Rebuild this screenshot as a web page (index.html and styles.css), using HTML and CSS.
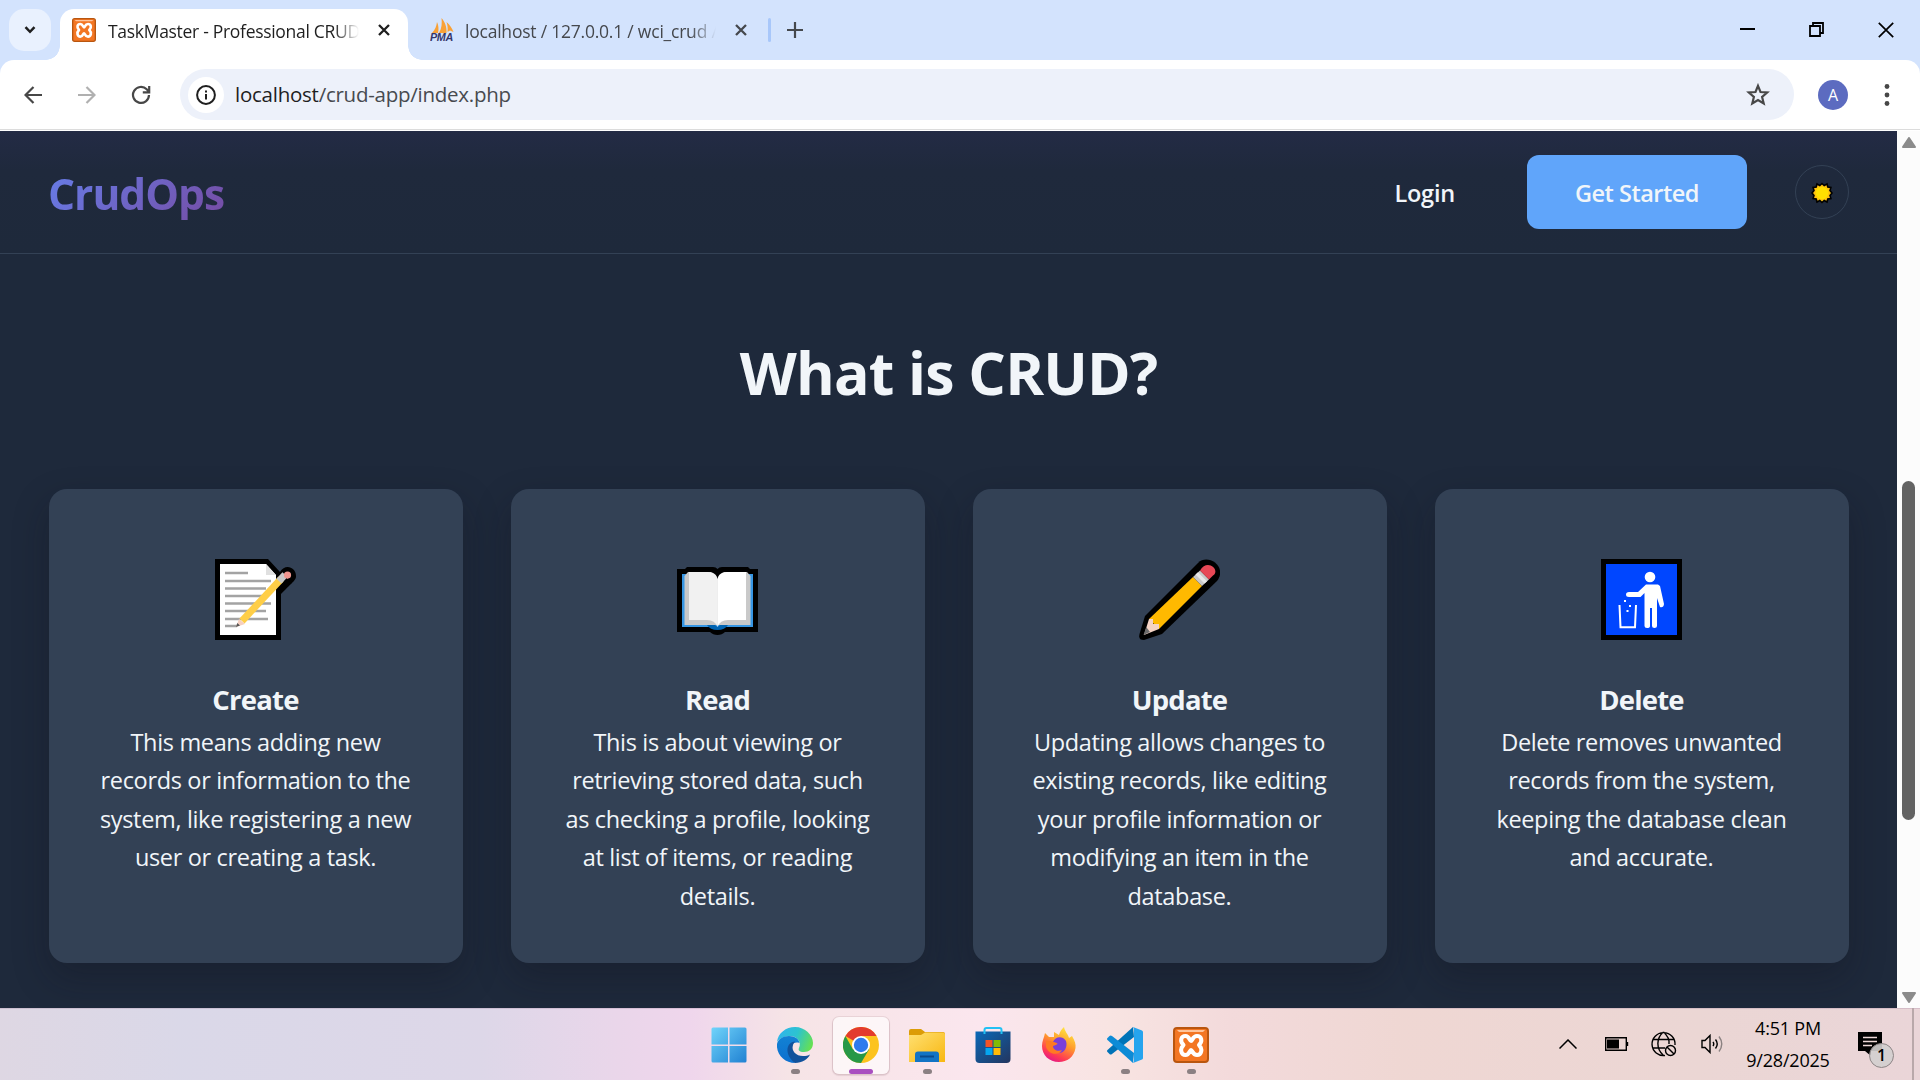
FILE: index.html
```html
<!DOCTYPE html>
<html lang="en">
<head>
<meta charset="utf-8">
<title>TaskMaster - Professional CRUD</title>
<link rel="stylesheet" href="styles.css">
</head>
<body>
<svg class="defs" width="0" height="0">
  <symbol id="xampp" viewBox="0 0 36 36">
    <rect x="1" y="1" width="34" height="34" rx="3" fill="#f37623" stroke="#b9560f" stroke-width="2"/>
    <path d="M4 3H32L30 5H6Z" fill="#ffc49a"/>
    <path d="M18 14C16.500 14 16.500 9 12.500 9C8 9 6.500 14 10.500 18C6.500 22 8 28 12.500 28C16.500 28 16.500 23 18 23C19.500 23 19.500 28 24 28C28.500 28 30 22 26 18C30 14 28.500 9 24 9C19.500 9 19.500 14 18 14Z" fill="none" stroke="#fff" stroke-width="4" stroke-linejoin="round"/>
  </symbol>
</svg>

<div class="tabstrip">
  <div class="tabsearch"><svg width="12" height="8" viewBox="0 0 12 8"><path d="M1.500 1.200L6 5.800L10.500 1.200" fill="none" stroke="#1f1f1f" stroke-width="2.500"/></svg></div>
  <div class="tab tab-active">
    <svg class="favicon" width="24" height="24"><use href="#xampp"/></svg>
    <span class="tab-title">TaskMaster - Professional CRUD</span>
    <svg class="tab-close" width="12" height="12" viewBox="0 0 12 12"><path d="M1 1L11 11M11 1L1 11" stroke="#1f1f1f" stroke-width="2.300"/></svg>
  </div>
  <div class="tab tab-idle">
    <svg class="favicon" width="24" height="24" viewBox="0 0 24 24"><path d="M2 15C5 12 6.500 8 7 4C8.500 7 9 11 8 15ZM9 15C12 10 12 5 11.500 0C15 4 17 9 16.500 15ZM17.500 14C18 10 17.500 7 16.500 4C20 7 22 10 23.500 14L20 12.500Z" fill="#f9a136"/><text x="0" y="23" class="pma" textLength="23" lengthAdjust="spacingAndGlyphs">PMA</text></svg>
    <span class="tab-title">localhost / 127.0.0.1 / wci_crud /</span>
    <svg class="tab-close" width="12" height="12" viewBox="0 0 12 12"><path d="M1 1L11 11M11 1L1 11" stroke="#45484d" stroke-width="2.300"/></svg>
  </div>
  <div class="tab-sep"></div>
  <svg class="newtab" width="16" height="16" viewBox="0 0 16 16"><path d="M8 0V16M0 8H16" stroke="#45484d" stroke-width="2.200"/></svg>
  <div class="winctl">
    <svg width="15" height="15" viewBox="0 0 15 15"><path d="M0 7H15" stroke="#000" stroke-width="2"/></svg>
    <svg width="15" height="15" viewBox="0 0 15 15"><path d="M1 4H11V14H1ZM4 4V1H14V11H11" fill="none" stroke="#000" stroke-width="1.800"/></svg>
    <svg width="16" height="16" viewBox="0 0 16 16"><path d="M.8 .8L15.200 15.200M15.200 .8L.8 15.200" stroke="#000" stroke-width="1.700"/></svg>
  </div>
</div>

<div class="toolbar-wrap">
<div class="toolbar">
  <svg class="nav-ico" width="18" height="18" viewBox="0 0 18 18"><path d="M18 9H2M9.500 1L1.500 9L9.500 17" fill="none" stroke="#474747" stroke-width="2.200"/></svg>
  <svg class="nav-ico" width="18" height="18" viewBox="0 0 18 18"><path d="M0 9H16M8.500 1L16.500 9L8.500 17" fill="none" stroke="#b0b0b0" stroke-width="2.200"/></svg>
  <svg class="nav-ico" width="20" height="20" viewBox="0 0 20 20"><path d="M18 10A8 8 0 1 1 15.700 4.300L18 6.700M18.200 1V7.400H11.800" fill="none" stroke="#474747" stroke-width="2.200"/></svg>
  <div class="omnibox">
    <div class="siteinfo"><svg width="20" height="20" viewBox="0 0 20 20"><circle cx="10" cy="10" r="8.900" fill="none" stroke="#1f1f1f" stroke-width="2"/><path d="M10 9V14.500M10 5.500V7.500" stroke="#1f1f1f" stroke-width="2"/></svg></div>
    <span class="url"><b>localhost</b>/crud-app/index.php</span>
    <svg class="star" width="24" height="24" viewBox="0 0 24 24"><path d="M12 2.800L14.500 9L21.200 9.500L16.100 13.900L17.700 20.500L12 17L6.300 20.500L7.900 13.900L2.800 9.500L9.500 9Z" fill="none" stroke="#474747" stroke-width="2.200"/></svg>
  </div>
  <div class="avatar">A</div>
  <svg class="kebab" width="6" height="24" viewBox="0 0 6 24"><g fill="#474747"><circle cx="3" cy="3.500" r="2.400"/><circle cx="3" cy="12" r="2.400"/><circle cx="3" cy="20.500" r="2.400"/></g></svg>
</div>
</div>

<div class="viewport">
  <div class="page">
    <header class="navbar">
      <div class="logo">CrudOps</div>
      <nav class="links">
        <span class="login">Login</span>
        <span class="cta">Get Started</span>
        <span class="theme"><svg width="22" height="24" viewBox="-11 -12 22 24"><path d="M0 -9.500L2.200 -7.500L5 -9L5.800 -6L8.900 -5.600L8 -2.500L10 0L8 2.500L8.900 5.600L5.800 6L5 9L2.200 7.500L0 9.500L-2.200 7.500L-5 9L-5.800 6L-8.900 5.600L-8 2.500L-10 0L-8 -2.500L-8.900 -5.600L-5.800 -6L-5 -9L-2.200 -7.500Z" fill="#ffc20e" stroke="#000" stroke-width="1.600"/><circle r="6.300" fill="#ffe000"/></svg></span>
      </nav>
    </header>
    <main class="section">
      <h2>What is CRUD?</h2>
      <div class="cards">
        <article class="card">
          <svg width="81" height="81" viewBox="0 0 81 81">
            <path d="M0 0H53L65 13C70 4 81 8 81 17C81 21 79 22 66 35V81H0Z"/>
            <path d="M5 5H51L61 16V76H5Z" fill="#fff"/><path d="M51 5V16H61Z" fill="#e0e0e0"/>
            <path d="M10 14H33M10 22H56M10 29.500H51M10 37H51M10 44.500H56M10 52H51M10 60H53M10 67H22" stroke="#a3a3a3" stroke-width="2.300"/>
            <path d="M21 68L24 60L30 65Z" fill="#f5cfc0"/><path d="M21 68L22.300 64L25 66.500Z" fill="#555"/>
            <path d="M27 62L66 20" stroke="#ffce47" stroke-width="7"/><path d="M64 22.200L70 15.700" stroke="#c8c8c8" stroke-width="7"/><path d="M70 15.700L72.500 13L76 16.500L72.500 20Z" fill="#f0968f"/><circle cx="72.500" cy="16" r="3.600" fill="#f0968f"/>
          </svg>
          <h3>Create</h3>
          <p>This means adding new<br>records or information to the<br>system, like registering a new<br>user or creating a task.</p>
        </article>
        <article class="card">
          <svg width="81" height="81" viewBox="0 -8 81 81">
            <path d="M0 2H8L10 0H36Q39 0 40.500 2Q42 0 45 0H71L73 2H81V65H48Q45 68 40.500 68Q36 68 33 65H0Z"/>
            <path d="M5 7H76V60H5Z" fill="#3796e3"/><path d="M7.500 9L11 5H70L73.500 9V58H7.500Z" fill="#c9c9c9"/>
            <path d="M12 5H31Q39 5 40.500 12V60Q38 53 30 53H12Z" fill="#f1f1f1"/><path d="M69 5H50Q42 5 40.500 12V60Q43 53 51 53H69Z" fill="#fff"/>
            <path d="M34 5H47Q41 7 40.500 12Q40 7 34 5Z"/><path d="M30 58H38L40.500 60L43 58H51Q48 63 40.500 63Q33 63 30 58Z" fill="#0063b1"/>
          </svg>
          <h3>Read</h3>
          <p>This is about viewing or<br>retrieving stored data, such<br>as checking a profile, looking<br>at list of items, or reading<br>details.</p>
        </article>
        <article class="card">
          <svg width="81" height="81" viewBox="0 0 81 81">
            <path d="M59 4C69 -6 89 8 78 22L23 75L5 81Q-1 81 .5 75L6 57Z"/>
            <path d="M10 60L54 18L63 27L20 70Z" fill="#ffb900"/>
            <path d="M10 60H14V65H20V70L5 76Z" fill="#f5d4c6"/><path d="M7.200 68L11 73L4.500 76Z" fill="#6b6b6b"/>
            <path d="M54 18L61 11.500L70 20.500L63 27Z" fill="#c9c9c9"/><path d="M56.500 15.500L59 13.300L68 22.300L65.500 24.500Z" fill="#e8e8e8"/>
            <path d="M61 11.500C68 -1 82 11 74 16.500L70 20.500Z" fill="#e74856"/>
          </svg>
          <h3>Update</h3>
          <p>Updating allows changes to<br>existing records, like editing<br>your profile information or<br>modifying an item in the<br>database.</p>
        </article>
        <article class="card">
          <svg width="81" height="81" viewBox="0 0 81 81">
            <path d="M0 0H81V81H0Z"/><path d="M5 5H76V76H5Z" fill="#0046ff"/>
            <g fill="#fff"><circle cx="49" cy="18" r="5.300"/><path d="M45 25.500H57L59 27L63 45Q62.500 49 59 48L56 39V67Q56 69 53.500 69Q51 69 51 67V49H49V67Q49 69 46 69Q43.500 69 43.500 67V34L39.500 38H28Q25 38 25 35.500Q25 33 28 33H37Z"/><path d="M23 41H25V43H23ZM28 46H30V48H28ZM25.500 51H27.500V53H25.500Z"/></g>
            <path d="M18.500 46L19.500 68.300H34L35 46" fill="none" stroke="#fff" stroke-width="2"/>
          </svg>
          <h3>Delete</h3>
          <p>Delete removes unwanted<br>records from the system,<br>keeping the database clean<br>and accurate.</p>
        </article>
      </div>
    </main>
  </div>
  <div class="scrollbar">
    <svg width="14" height="11" viewBox="0 0 14 11"><path d="M7 1L13 10H1Z" fill="#8b8b8b" stroke="#8b8b8b" stroke-width="2" stroke-linejoin="round"/></svg>
    <div class="thumb"></div>
    <svg class="down" width="14" height="11" viewBox="0 0 14 11"><path d="M7 10L13 1H1Z" fill="#8b8b8b" stroke="#8b8b8b" stroke-width="2" stroke-linejoin="round"/></svg>
  </div>
</div>

<footer class="taskbar">
  <div class="apps">
    <div class="app"><svg width="36" height="36" viewBox="0 0 36 36"><defs><linearGradient id="w" x1="0" y1="0" x2="1" y2="1" gradientUnits="userSpaceOnUse" gradientTransform="scale(36)"><stop stop-color="#71d5fb"/><stop offset="1" stop-color="#1f80d2"/></linearGradient></defs><path d="M2 .5H17V17.500H.5V2Q.5 .5 2 .5ZM18.500 .5H34Q35.500 .5 35.500 2V17.500H18.500ZM.5 19H17V35.500H2Q.5 35.500 .5 34ZM18.500 19H35.500V34Q35.500 35.500 34 35.500H18.500Z" fill="url(#w)"/></svg></div>
    <div class="app run"><svg width="36" height="36" viewBox="0 0 36 36"><defs><linearGradient id="e1" x1="0" x2="1" y1=".3" y2=".6"><stop stop-color="#30b4ec"/><stop offset=".5" stop-color="#2cc3d0"/><stop offset="1" stop-color="#66e052"/></linearGradient><linearGradient id="e2" x1="0" y1="0" x2="0" y2="1"><stop stop-color="#1282d4"/><stop offset="1" stop-color="#0d6fcf"/></linearGradient></defs><path d="M0 15C1 6 9 0 18 0C28 0 36 8 36 16C36 22 32 25 27 25C22 25 21 23 22 21C25 15 20 9 13 9C7 9 2 12 0 15Z" fill="url(#e1)"/><path d="M0 17C1 12 6 9 12 9C18 9 22 12 22.500 16C13 13 10 25 18 36C8 36 -1 28 0 17Z" fill="url(#e2)"/><path d="M18 14.500C9 15 7 28 18 36C25 36 31 32 33 27.500C31 28.500 29 29 26 29C19 29 14 24 16 18C16.500 16 18 15 18 14.500Z" fill="#10529c"/></svg></div>
    <div class="app run current"><svg width="36" height="36" viewBox="0 0 36 36"><circle cx="18" cy="18" r="18" fill="#fcc31e"/><path d="M18 18L2.400 9A18 18 0 0 1 33.600 9H18Z" fill="#e33b2e"/><path d="M2.400 9A18 18 0 0 0 18 36L26 22.500L18 18L10 22.500Z" fill="#279847"/><circle cx="18" cy="18" r="9" fill="#fff"/><circle cx="18" cy="18" r="7.200" fill="#2f7bed"/></svg></div>
    <div class="app run"><svg width="36" height="36" viewBox="0 0 36 36"><path d="M0 4Q0 2 2 2H12L16 5H34Q36 5 36 7V12H0Z" fill="#dc9c07"/><defs><linearGradient id="f" x1="0" y1="0" x2="1" y2="1"><stop stop-color="#ffe072"/><stop offset="1" stop-color="#f8b711"/></linearGradient></defs><path d="M0 8H12L16 5.500H34Q36 5.500 36 7.500V35H0Z" fill="url(#f)"/><path d="M6 35V27.500Q6 24.500 9 24.500H27Q30 24.500 30 27.500V35Z" fill="#1274c5"/><path d="M11 29.500H25" stroke="#0a4a8c" stroke-width="2"/></svg></div>
    <div class="app"><svg width="36" height="36" viewBox="0 0 36 36"><defs><linearGradient id="s" x1="0" y1="0" x2="1" y2="1"><stop stop-color="#0a69b8"/><stop offset="1" stop-color="#24355e"/></linearGradient></defs><path d="M.5 4.500H35.500V32Q35.500 36 31.500 36H4.500Q.5 36 .5 32Z" fill="url(#s)"/><path d="M9.500 7V3Q9.500 1 11.500 1H24.500Q26.500 1 26.500 3V7" fill="none" stroke="#22c1f4" stroke-width="2"/><path d="M10.500 13H17.500V20H10.500Z" fill="#f35325"/><path d="M18.500 13H25.500V20H18.500Z" fill="#81bc06"/><path d="M10.500 21H17.500V28H10.500Z" fill="#05a6f0"/><path d="M18.500 21H25.500V28H18.500Z" fill="#ffba08"/></svg></div>
    <div class="app"><svg width="36" height="36" viewBox="0 0 36 36"><defs><linearGradient id="ff" x1=".8" y1="0" x2=".3" y2="1"><stop stop-color="#fff043"/><stop offset=".45" stop-color="#ff9a2c"/><stop offset=".8" stop-color="#ff3b52"/><stop offset="1" stop-color="#e3168a"/></linearGradient></defs><path d="M4 6L8 10L13 10L13 5L18 8C19 4 21 2 23 0C24 5 27 7 28 11L31 9C34 14 35 17 34.500 21C33 30 26 35 18 35C8 35 1 28 1 19C1 14 3 11 4 6Z" fill="url(#ff)"/><path d="M12 15C14 10 21 8 25 14C27 20 23 27 17 26C11 25 9 20 12 18L17 17Z" fill="#7a3fd8"/><path d="M5 14C9 13 11 15 16 16C16 18 14 18 12 19C12 23 17 25 21 23C18 29 8 28 5 20Z" fill="#ff7a22"/></svg></div>
    <div class="app run"><svg width="36" height="36" viewBox="0 0 36 36"><path d="M26 0L27 10L5 27Q3.500 28 2.500 27L.5 25Q-.5 24 .5 23Z" fill="#0073b7"/><path d="M26 36L27 26L5 9Q3.500 8 2.500 9L.5 11Q-.5 12 .5 13Z" fill="#0d8bd6"/><path d="M26 0L35 3.500Q36 4 36 5V31Q36 32 35 32.500L26 36Q27 35 27 33V3Q27 1 26 0Z" fill="#26a4ee"/></svg></div>
    <div class="app run"><svg width="36" height="36"><use href="#xampp"/></svg></div>
  </div>
  <div class="tray">
    <svg width="18" height="10" viewBox="0 0 18 10"><path d="M.5 9.500L9 1L17.500 9.500" fill="none" stroke="#000" stroke-width="1.500"/></svg>
    <svg width="24" height="14" viewBox="0 0 24 14"><path d="M.7 .7H21.300V13.300H.7ZM22.500 5V9" fill="none" stroke="#000" stroke-width="1.400"/><path d="M2 2.500H14V11.500H2Z"/></svg>
    <svg width="26" height="26" viewBox="0 0 26 26"><g fill="none" stroke="#000" stroke-width="1.400"><path d="M14 24.500A11.500 11.500 0 1 1 24 14M2 8.500H23M2 17H14M12.500 1C5 7 5 18 12.500 24.500M12.500 1C17 5 18.500 9 18 13"/><circle cx="19.500" cy="19.500" r="5"/><path d="M16 16L23 23"/></g></svg>
    <svg width="22" height="20" viewBox="0 0 22 20"><g fill="none" stroke="#000" stroke-width="1.400"><path d="M1 6.500H4L9 1.500V18.500L4 13.500H1ZM12 8Q13.500 10 12 12M14.500 5.500Q18 10 14.500 14.500"/><path d="M18 2.500Q23.500 10 18 17.500" stroke="#8c8383"/></g></svg>
    <div class="clock"><span>4:51 PM</span><span>9/28/2025</span></div>
    <div class="notif"><svg width="24" height="24" viewBox="0 0 24 24"><path d="M0 0H24V19H13V24L7 19H0Z"/><path d="M5 5.500H19M5 9.500H19M5 13.500H14" stroke="#ecd7d6" stroke-width="1.300"/></svg><span class="badge">1</span></div>
    <div class="peek"></div>
  </div>
</footer>
</body>
</html>
```
FILE: styles.css
```css
* { box-sizing: border-box; }
body {
  margin: 0;
  width: 1920px;
  height: 1080px;
  overflow: hidden;
  display: flex;
  flex-direction: column;
  font-family: "Open Sans", "Noto Sans", sans-serif;
}
svg { display: block; flex: none; }
.defs { position: absolute; }

/* Browser tabs */
.tabstrip {
  height: 60px;
  flex: none;
  display: flex;
  align-items: center;
  background: #d3e3fd;
  padding-left: 9px;
}
.tabsearch {
  width: 42px;
  height: 42px;
  border-radius: 15px;
  background: #e9f1fe;
  display: flex;
  align-items: center;
  justify-content: center;
}
.tab {
  display: flex;
  align-items: center;
  height: 51px;
  align-self: flex-end;
  padding-bottom: 9px;
  font-size: 17.5px;
  letter-spacing: -0.3px;
}
.tab-active {
  position: relative;
  width: 348px;
  margin-left: 9px;
  padding-left: 12px;
  background: #fff;
  border-radius: 14px 14px 0 0;
  color: #1f1f1f;
}
.tab-active::before,
.tab-active::after {
  content: "";
  position: absolute;
  bottom: 0;
  width: 14px;
  height: 14px;
}
.tab-active::before { left: -14px; background: radial-gradient(circle at 0 0, transparent 13.5px, #fff 14px); }
.tab-active::after { right: -14px; background: radial-gradient(circle at 100% 0, transparent 13.5px, #fff 14px); }
.tab-idle { color: #45484d; padding-left: 22px; width: 360px; }
.tab-title {
  width: 251px;
  margin-left: 12px;
  padding-top: 2px;
  line-height: 26px;
  white-space: nowrap;
  overflow: hidden;
  -webkit-mask-image: linear-gradient(90deg, #000 90%, transparent);
  mask-image: linear-gradient(90deg, #000 90%, transparent);
}
.tab-idle .tab-title { margin-left: 11px; letter-spacing: -0.22px; }
.tab-close { margin-left: 19px; }
.favicon { flex: none; }
.pma { font: italic 700 10px "Liberation Sans", sans-serif; fill: #34366b; }
.tab-sep { width: 3px; height: 24px; border-radius: 2px; background: #a8c7fa; }
.newtab { margin-left: 16px; }
.winctl { display: flex; gap: 54px; margin-left: auto; padding-right: 26px; }

/* Address bar */
.toolbar-wrap { flex: none; background: #d3e3fd; }
.toolbar {
  height: 71px;
  display: flex;
  align-items: center;
  padding: 0 0 2px 24px;
  background: #fff;
  border-radius: 14px 14px 0 0;
  box-shadow: inset 0 -1px #fff, inset 0 -2px #dcdcdc;
}
.nav-ico + .nav-ico { margin-left: 36px; }
.nav-ico:nth-child(3) { margin-left: 35px; }
.omnibox {
  width: 1614px;
  height: 51px;
  margin-left: 29px;
  padding: 0 24px 0 8px;
  display: flex;
  align-items: center;
  border-radius: 26px;
  background: #edf1fa;
}
.siteinfo {
  width: 36px;
  height: 36px;
  border-radius: 50%;
  background: #fff;
  display: flex;
  align-items: center;
  justify-content: center;
}
.url { margin-left: 11px; padding-bottom: 1px; font-size: 20.5px; letter-spacing: -0.25px; color: #474a4f; }
.url b { font-weight: 400; color: #1f1f1f; }
.star { margin-left: auto; }
.avatar {
  width: 30px;
  height: 30px;
  margin-left: 24px;
  border-radius: 50%;
  background: #5c6bc0;
  color: #fff;
  font-size: 16px;
  line-height: 30px;
  text-align: center;
}
.kebab { margin-left: 36px; }

/* Web page */
.viewport { height: 877px; flex: none; display: flex; }
.page { width: 1897px; background: #1e293b; overflow: hidden; }
.navbar {
  height: 123px;
  display: flex;
  align-items: center;
  justify-content: space-between;
  padding: 0 48px;
  border-bottom: 1px solid #334155;
  background: linear-gradient(#232b45, #1f293c 40px, #1e293b);
}
.logo {
  font-size: 42.5px;
  font-weight: 700;
  letter-spacing: -1px;
  line-height: 60px;
  margin-top: 4px;
  background: linear-gradient(135deg, #667eea, #764ba2);
  -webkit-background-clip: text;
  background-clip: text;
  color: transparent;
}
.links {
  display: flex;
  align-items: center;
  font-size: 23.5px;
  font-weight: 600;
  color: #f1f5f9;
}
.login { margin-right: 72px; padding-top: 2px; letter-spacing: -0.2px; }
.cta {
  width: 220px;
  height: 74px;
  line-height: 77px;
  border-radius: 12px;
  background: #60a5fa;
  text-align: center;
  letter-spacing: -0.5px;
}
.theme {
  width: 54px;
  height: 54px;
  margin-left: 48px;
  padding-top: 2px;
  border: 1px solid #334155;
  border-radius: 50%;
  display: flex;
  align-items: center;
  justify-content: center;
}
.section { padding: 70px 48px 0; color: #f1f5f9; }
h2 {
  margin: 0;
  height: 96px;
  line-height: 96px;
  text-align: center;
  font-size: 59px;
  font-weight: 700;
  letter-spacing: -0.8px;
}
.cards { display: grid; grid-template-columns: repeat(4, 414px); gap: 48px; margin-top: 69px; margin-left: 1px; }
.card {
  height: 474px;
  padding: 70px 1px 0 0;
  display: flex;
  flex-direction: column;
  align-items: center;
  border-radius: 18px;
  background: #334155;
  box-shadow: 0 15px 36px rgba(15, 15, 25, 0.3);
  text-align: center;
}
h3 {
  margin: 37px 0 0;
  height: 46px;
  line-height: 46px;
  font-size: 27.5px;
  font-weight: 700;
  letter-spacing: -0.8px;
}
.card p { margin: 0; font-size: 23.5px; line-height: 38.4px; letter-spacing: -0.34px; white-space: nowrap; }
.scrollbar {
  width: 23px;
  display: flex;
  flex-direction: column;
  align-items: center;
  padding: 6px 0 5px;
  background: #fcfcfc;
}
.thumb { width: 13px; height: 339px; margin-top: 333px; border-radius: 7px; background: #636363; }
.down { margin-top: auto; }

/* Taskbar */
.taskbar {
  height: 72px;
  display: flex;
  padding-left: 701px;
  background: linear-gradient(90deg, #ded7e3 0, #dad8e8 180px, #ddd7e8 480px, #ead6ea 620px, #efd6ec 690px, #f6e4e6 790px, #fbe6ee 980px, #f8e4e2 1110px, #f3dadb 1230px, #efd7d3 1400px, #ebd6d4 1700px, #ead5d8 1920px);
  border-top: 1px solid rgba(150, 120, 150, 0.25);
}
.apps { display: flex; gap: 10px; padding-top: 8px; }
.app {
  width: 56px;
  height: 57px;
  display: flex;
  flex-direction: column;
  align-items: center;
  padding-top: 10px;
  border-radius: 6px;
}
.run::after { content: ""; width: 9px; height: 5px; margin-top: 6px; border-radius: 3px; background: #8b8083; }
.current { background: rgba(255, 255, 255, 0.65); box-shadow: 0 0 0 1px rgba(160, 120, 130, 0.15), 0 1px 1px 1px rgba(130, 90, 100, 0.15); }
.current::after { width: 24px; background: #a94fc0; }
.tray { display: flex; align-items: center; margin-left: 340px; padding-bottom: 1px; }
.tray > svg:nth-child(2) { margin-left: 28px; }
.tray > svg:nth-child(3) { margin-left: 22px; }
.tray > svg:nth-child(4) { margin-left: 24px; }
.clock {
  width: 100px;
  margin-left: 15px;
  display: flex;
  flex-direction: column;
  text-align: center;
  font-size: 18px;
  line-height: 32px;
  letter-spacing: -0.2px;
}
.notif { position: relative; margin-left: 20px; }
.badge {
  position: absolute;
  left: 11px;
  top: 11px;
  width: 25px;
  height: 25px;
  border: 1.500px solid #8d8586;
  border-radius: 50%;
  background: rgba(211, 207, 207, 0.9);
  font-size: 16px;
  font-weight: 600;
  line-height: 22px;
  text-align: center;
}
.peek { width: 2px; height: 72px; margin-left: 30px; background: #b9a8aa; }
```
